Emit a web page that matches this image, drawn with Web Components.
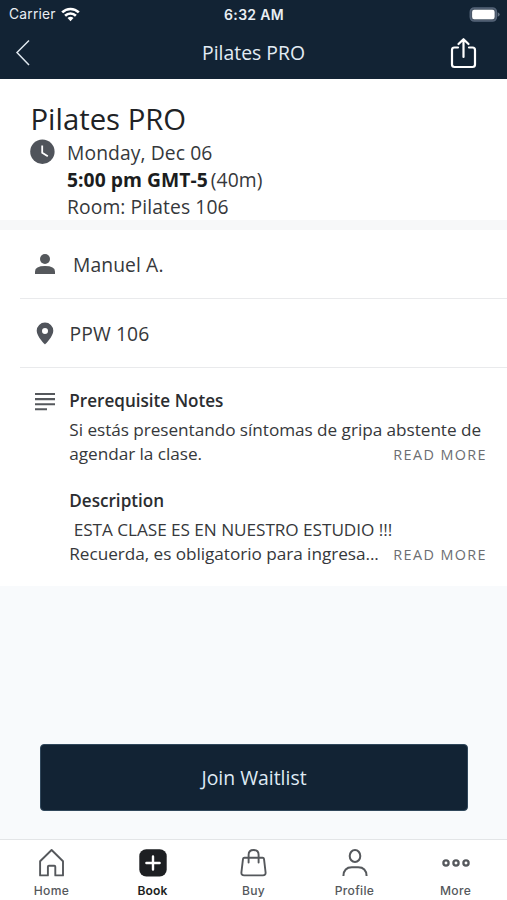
<!DOCTYPE html>
<html lang="en">
<head>
<meta charset="utf-8">
<title>Pilates PRO</title>
<style>
html,body{margin:0;height:100%}
body{font-family:"Open Sans","Noto Sans",sans-serif;color:#2b2d30;background:#f8fafc;overflow:hidden}
</style>
</head>
<body>
<class-screen></class-screen>
<script>
const define = (name, html) => customElements.define(name, class extends HTMLElement {
  constructor() {
    super();
    const t = document.createElement('template');
    t.innerHTML = html;
    this.attachShadow({mode: 'open'}).append(t.content.cloneNode(true));
  }
});

define('status-bar', `
<style>
:host{display:grid;grid-template-columns:1fr auto 1fr;align-items:center;height:27px;padding:0 7px 0 9px;color:#e9eef3;font:13.8px/27px Inter,sans-serif}
.left{display:flex;align-items:center;gap:5.5px}
.carrier{letter-spacing:.22px;padding-top:1px}
.time{font-weight:600;font-size:14px;letter-spacing:.3px;margin-right:1px}
.bat{justify-self:end;display:block}
svg{display:block}
</style>
<div class="left"><span class="carrier">Carrier</span>
<svg width="19" height="15" viewBox="0 0 19 15" fill="none" stroke="#fff" stroke-width="2.6"><path d="M1.2 5.4a11.8 11.8 0 0 1 16.6 0"/><path d="M4.1 8.7a7.7 7.7 0 0 1 10.8 0"/><path d="M6.5 11.1a4.3 4.3 0 0 1 6 0L9.5 14.2z" fill="#fff" stroke="none"/></svg></div>
<span class="time">6:32 AM</span>
<svg class="bat" width="31" height="15" viewBox="0 0 31 15"><rect x="1.2" y=".9" width="26.3" height="13.2" rx="4" fill="#4a5868" stroke="#56657a" stroke-width="1.3"/><rect x="3.1" y="2.8" width="22.5" height="9.4" rx="2.2" fill="#fff"/><path d="M28.7 5.2q2 .8 2 2.3t-2 2.3z" fill="#647282"/></svg>`);

define('nav-bar', `
<style>
:host{display:grid;grid-template-columns:60px 1fr 60px;align-items:center;height:52px;color:#e3ecf4}
.t{text-align:center;font-size:19.4px;line-height:52px}
svg{display:block}
.share{justify-self:end;margin-right:30.5px;margin-top:-1px}
</style>
<svg width="34" height="28" viewBox="0 0 34 28" fill="none" stroke="#dfe7ee" stroke-width="1.5"><path d="M29 1.5 17 13.5 29 26"/></svg>
<div class="t"><slot></slot></div>
<svg class="share" width="28" height="32" viewBox="0 0 28 32" fill="none" stroke="#fff" stroke-width="2.2" stroke-linejoin="round" stroke-linecap="round"><path d="M9 10.5H5.5q-2.5 0-2.5 2.5v14.5q0 2.5 2.5 2.5h18q2.5 0 2.5-2.5V13q0-2.5-2.5-2.5H20M14.5 20V2.5M9.5 7l5-4.8 5 4.8"/></svg>`);

define('class-header', `
<style>
:host{display:block;box-sizing:border-box;padding:20px 0 0 30.5px;background:#fff;border-bottom:10px solid #f7f8f9;height:151px}
h1{margin:0;font-weight:400;font-size:29.3px;line-height:40px;color:#202225}
.row{display:flex;gap:12px}
svg{display:block;margin:-.5px 0 0 -.5px}
.x{font-size:19.3px;line-height:27px;letter-spacing:.1px;color:#36383b}
b{color:#1b1d20;letter-spacing:.04px}
.gap{margin-left:3px}
</style>
<h1>Pilates PRO</h1>
<div class="row">
<svg width="25" height="26" viewBox="0 0 25 26"><circle cx="12.4" cy="12.7" r="12.2" fill="#50545b"/><path d="M12.2 6.5v7.2l5.6 3.6" fill="none" stroke="#fff" stroke-width="1.8"/></svg>
<div class="x"><div>Monday, Dec 06</div><div><b>5:00 pm GMT-5</b><span class="gap">(40m)</span></div><div>Room: Pilates 106</div></div>
</div>`);

define('info-row', `
<style>
:host{display:flex;align-items:center;box-sizing:border-box;margin-left:20px;height:69px;border-bottom:1.5px solid #e9eaec;font-size:19.3px;letter-spacing:.1px;color:#36383b}
.i{width:49.5px;display:flex;justify-content:center}
.t{line-height:30px;padding-top:2px}
</style>
<div class="i"><slot name="icon"></slot></div><div class="t"><slot></slot></div>`);

define('note-block', `
<style>
:host{display:block;height:100px;color:#36383b}
.h{font-weight:600;font-size:17.1px;line-height:28px;color:#2b2d30}
.b{display:grid;grid-template-columns:1fr auto;font-size:17.2px;letter-spacing:-.045px;line-height:24.5px;margin-top:3px;white-space:pre}
.one{grid-column:1/3}
.m{font-size:14.4px;letter-spacing:1.4px;color:#6b6e72;padding-top:1.4px}
</style>
<div class="h"><slot name="title"></slot></div>
<div class="b"><div class="one"><slot name="first"></slot></div><div><slot></slot></div><div class="m">READ MORE</div></div>`);

define('class-notes', `
<style>
:host{display:flex;box-sizing:border-box;height:218px;padding:18.6px 20px 0 35px;gap:14.3px}
.c{flex:1}
svg{display:block;margin-top:5px}
</style>
<svg width="20" height="20" viewBox="0 0 20 20" stroke="#55585c" stroke-width="2.1"><path d="M0 2h20M0 7.1h20M0 12.2h20M0 17.2h12"/></svg>
<div class="c">
<note-block><span slot="title">Prerequisite Notes</span><span slot="first">Si estás presentando síntomas de gripa abstente de</span>agendar la clase.</note-block>
<note-block><span slot="title">Description</span><span slot="first" style="letter-spacing:-.05px"> ESTA CLASE ES EN NUESTRO ESTUDIO !!!</span>Recuerda, es obligatorio para ingresa...</note-block>
</div>`);

define('action-button', `
<style>
:host{display:block;margin:0 39px 28px 40px}
button{display:block;width:100%;height:67px;border:1px solid #30475b;border-radius:4px;background:#122334;color:#dfeaf4;font:19.4px "Open Sans",sans-serif;padding:0}
</style><button><slot></slot></button>`);

define('tab-item', `
<style>
:host{display:flex;flex-direction:column;align-items:center;color:#55585c;font:500 12.1px/16px Inter,sans-serif;letter-spacing:.3px}
:host([active]){color:#1d1f22;font-weight:600;letter-spacing:.1px}
.i{height:30px;margin:8px 0 5px}
</style><div class="i"><slot name="icon"></slot></div><span><slot></slot></span>`);

define('tab-bar', `
<style>
:host{display:grid;grid-template-columns:repeat(5,101px);justify-content:center;box-sizing:border-box;height:61px;border-top:1.5px solid #e3e5e7;background:#fff}
svg{display:block}
</style>
<tab-item><svg slot="icon" width="30" height="30" viewBox="0 0 30 30" fill="none" stroke="#55585c" stroke-width="1.9" stroke-linejoin="round"><path d="M3.1 27.4V13.2L14.6 2l11.4 11.2v14.2h-7.7v-8.7q0-1-1-1h-5.4q-1 0-1 1v8.7z"/></svg>Home</tab-item>
<tab-item active><svg slot="icon" width="30" height="30" viewBox="0 0 30 30"><rect x="1.3" y="1.3" width="27.4" height="27.2" rx="7" fill="#1d1f22"/><path d="M15 8.4v13.2M8.4 15h13.2" stroke="#fff" stroke-width="2.4" stroke-linecap="round"/></svg>Book</tab-item>
<tab-item><svg slot="icon" width="30" height="30" viewBox="0 0 30 30" fill="none" stroke="#55585c" stroke-width="1.9" stroke-linejoin="round" stroke-linecap="round"><path d="M5.4 9.7h18.2q1.2 0 1.4 1.2l1.6 13.6q.2 2.9-2.7 2.9H5.1q-2.9 0-2.7-2.9L4 10.9q.2-1.2 1.4-1.2zM9.6 14.5V6.8Q9.6 2 14.6 2t5 4.8v7.7"/></svg>Buy</tab-item>
<tab-item><svg slot="icon" width="30" height="30" viewBox="0 0 30 30" fill="none" stroke="#55585c" stroke-width="2"><ellipse cx="15" cy="8" rx="5.3" ry="6"/><path d="M3.4 28q.4-8.7 8.4-8.7h6.4q8 0 8.4 8.7"/></svg>Profile</tab-item>
<tab-item><svg slot="icon" width="30" height="30" viewBox="0 0 30 30" fill="none" stroke="#55585c" stroke-width="2.3"><circle cx="5" cy="15" r="2.6"/><circle cx="15" cy="15" r="2.6"/><circle cx="25" cy="15" r="2.6"/></svg>More</tab-item>`);

define('class-screen', `
<style>
:host{display:flex;flex-direction:column;height:100vh;background:#f8fafc}
.top{background:#122334;height:79px}
.body{background:#fff;height:356px}
.space{flex:1}
svg{display:block}
</style>
<div class="top"><status-bar></status-bar><nav-bar>Pilates PRO</nav-bar></div>
<class-header></class-header>
<div class="body">
<info-row><svg slot="icon" width="20" height="20" viewBox="0 0 20 20" fill="#55585c"><circle cx="10" cy="5" r="5"/><path d="M0 20v-2.5Q0 12 10 12t10 5.5V20z"/></svg><span style="margin-left:3.5px">Manuel A.</span></info-row>
<info-row><svg slot="icon" width="18" height="23" viewBox="0 0 18 23"><path d="M9 .5A8.3 8.3 0 0 0 .7 8.8C.7 14.6 9 22.5 9 22.5s8.3-7.9 8.3-13.7A8.3 8.3 0 0 0 9 .5zm0 5.4a3 3 0 1 1 0 6 3 3 0 0 1 0-6z" fill="#50545b"/></svg>PPW 106</info-row>
<class-notes></class-notes>
</div>
<div class="space"></div>
<action-button>Join Waitlist</action-button>
<tab-bar></tab-bar>`);
</script>
</body>
</html>
